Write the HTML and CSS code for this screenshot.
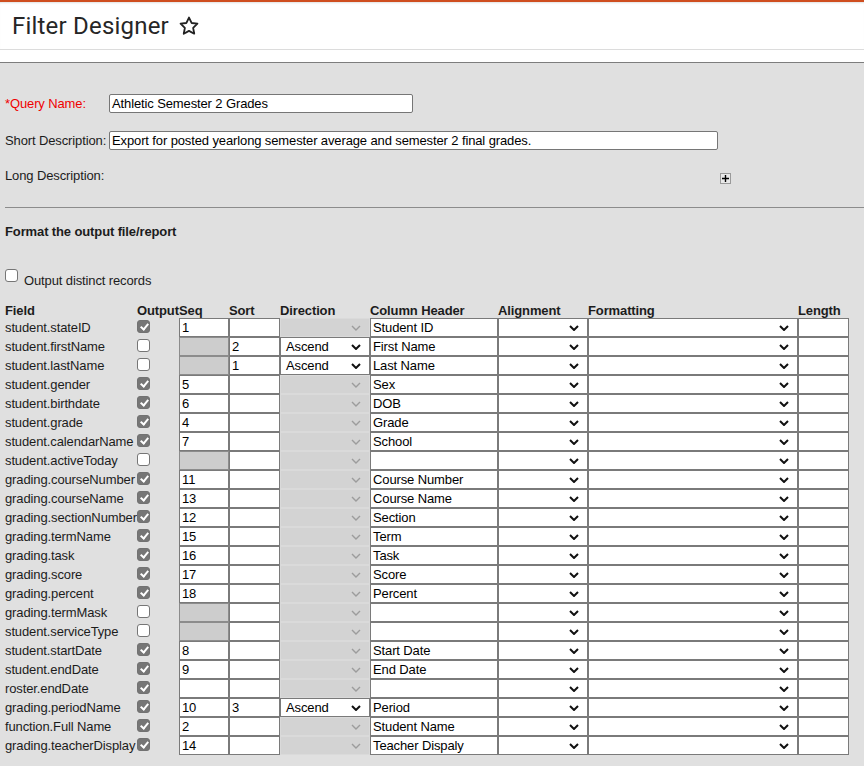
FILE: index.html
```html
<!DOCTYPE html>
<html>
<head>
<meta charset="utf-8">
<title>Filter Designer</title>
<link rel="stylesheet" href="styles.css">
</head>
<body>
<header class="top">
  <h1 class="title">Filter Designer</h1>
  <svg class="star" viewBox="0 0 24 24" width="22" height="22"><path d="M12 2.8l2.8 5.9 6.4.8-4.7 4.5 1.2 6.4L12 17.3l-5.7 3.1 1.2-6.4-4.7-4.5 6.4-.8z" fill="none" stroke="#222" stroke-width="2" stroke-linejoin="round"/></svg>
</header>
<div class="subbar"></div>
<main class="main">
  <div class="frow r1"><label class="lbl req">*Query Name:</label><div class="tin w1">Athletic Semester 2 Grades</div></div>
  <div class="frow r2"><label class="lbl">Short Description:</label><div class="tin w2">Export for posted yearlong semester average and semester 2 final grades.</div></div>
  <div class="frow r3"><label class="lbl">Long Description:</label><span class="plus"><svg viewBox="0 0 9 9" width="9" height="9"><path d="M4.5 1v7M1 4.5h7" stroke="#000" stroke-width="1.4"/></svg></span></div>
  <hr class="sep">
  <div class="sect">Format the output file/report</div>
  <div class="distinct"><span class="cb"></span><span class="dlbl">Output distinct records</span></div>
  <table class="grid">
    <colgroup><col class="c-f"><col class="c-o"><col class="c-s"><col class="c-so"><col class="c-d"><col class="c-h"><col class="c-a"><col class="c-fm"><col class="c-l"></colgroup>
    <thead><tr><th>Field</th><th>Output</th><th>Seq</th><th>Sort</th><th>Direction</th><th>Column Header</th><th>Alignment</th><th>Formatting</th><th>Length</th></tr></thead>
    <tbody>
      <tr><td class="fld">student.stateID</td><td><span class="cb on"></span></td><td><div class="in">1</div></td><td><div class="in"></div></td><td><div class="sel dis"><span></span><svg class="chev" viewBox="0 0 10 6"><path d="M1 1l4 4 4-4"/></svg></div></td><td><div class="in">Student ID</div></td><td><div class="sel"><span></span><svg class="chev" viewBox="0 0 10 6"><path d="M1 1l4 4 4-4"/></svg></div></td><td><div class="sel"><span></span><svg class="chev" viewBox="0 0 10 6"><path d="M1 1l4 4 4-4"/></svg></div></td><td><div class="in"></div></td></tr>
      <tr><td class="fld">student.firstName</td><td><span class="cb"></span></td><td><div class="in dis"></div></td><td><div class="in">2</div></td><td><div class="sel"><span>Ascend</span><svg class="chev" viewBox="0 0 10 6"><path d="M1 1l4 4 4-4"/></svg></div></td><td><div class="in">First Name</div></td><td><div class="sel"><span></span><svg class="chev" viewBox="0 0 10 6"><path d="M1 1l4 4 4-4"/></svg></div></td><td><div class="sel"><span></span><svg class="chev" viewBox="0 0 10 6"><path d="M1 1l4 4 4-4"/></svg></div></td><td><div class="in"></div></td></tr>
      <tr><td class="fld">student.lastName</td><td><span class="cb"></span></td><td><div class="in dis"></div></td><td><div class="in">1</div></td><td><div class="sel"><span>Ascend</span><svg class="chev" viewBox="0 0 10 6"><path d="M1 1l4 4 4-4"/></svg></div></td><td><div class="in">Last Name</div></td><td><div class="sel"><span></span><svg class="chev" viewBox="0 0 10 6"><path d="M1 1l4 4 4-4"/></svg></div></td><td><div class="sel"><span></span><svg class="chev" viewBox="0 0 10 6"><path d="M1 1l4 4 4-4"/></svg></div></td><td><div class="in"></div></td></tr>
      <tr><td class="fld">student.gender</td><td><span class="cb on"></span></td><td><div class="in">5</div></td><td><div class="in"></div></td><td><div class="sel dis"><span></span><svg class="chev" viewBox="0 0 10 6"><path d="M1 1l4 4 4-4"/></svg></div></td><td><div class="in">Sex</div></td><td><div class="sel"><span></span><svg class="chev" viewBox="0 0 10 6"><path d="M1 1l4 4 4-4"/></svg></div></td><td><div class="sel"><span></span><svg class="chev" viewBox="0 0 10 6"><path d="M1 1l4 4 4-4"/></svg></div></td><td><div class="in"></div></td></tr>
      <tr><td class="fld">student.birthdate</td><td><span class="cb on"></span></td><td><div class="in">6</div></td><td><div class="in"></div></td><td><div class="sel dis"><span></span><svg class="chev" viewBox="0 0 10 6"><path d="M1 1l4 4 4-4"/></svg></div></td><td><div class="in">DOB</div></td><td><div class="sel"><span></span><svg class="chev" viewBox="0 0 10 6"><path d="M1 1l4 4 4-4"/></svg></div></td><td><div class="sel"><span></span><svg class="chev" viewBox="0 0 10 6"><path d="M1 1l4 4 4-4"/></svg></div></td><td><div class="in"></div></td></tr>
      <tr><td class="fld">student.grade</td><td><span class="cb on"></span></td><td><div class="in">4</div></td><td><div class="in"></div></td><td><div class="sel dis"><span></span><svg class="chev" viewBox="0 0 10 6"><path d="M1 1l4 4 4-4"/></svg></div></td><td><div class="in">Grade</div></td><td><div class="sel"><span></span><svg class="chev" viewBox="0 0 10 6"><path d="M1 1l4 4 4-4"/></svg></div></td><td><div class="sel"><span></span><svg class="chev" viewBox="0 0 10 6"><path d="M1 1l4 4 4-4"/></svg></div></td><td><div class="in"></div></td></tr>
      <tr><td class="fld">student.calendarName</td><td><span class="cb on"></span></td><td><div class="in">7</div></td><td><div class="in"></div></td><td><div class="sel dis"><span></span><svg class="chev" viewBox="0 0 10 6"><path d="M1 1l4 4 4-4"/></svg></div></td><td><div class="in">School</div></td><td><div class="sel"><span></span><svg class="chev" viewBox="0 0 10 6"><path d="M1 1l4 4 4-4"/></svg></div></td><td><div class="sel"><span></span><svg class="chev" viewBox="0 0 10 6"><path d="M1 1l4 4 4-4"/></svg></div></td><td><div class="in"></div></td></tr>
      <tr><td class="fld">student.activeToday</td><td><span class="cb"></span></td><td><div class="in dis"></div></td><td><div class="in"></div></td><td><div class="sel dis"><span></span><svg class="chev" viewBox="0 0 10 6"><path d="M1 1l4 4 4-4"/></svg></div></td><td><div class="in"></div></td><td><div class="sel"><span></span><svg class="chev" viewBox="0 0 10 6"><path d="M1 1l4 4 4-4"/></svg></div></td><td><div class="sel"><span></span><svg class="chev" viewBox="0 0 10 6"><path d="M1 1l4 4 4-4"/></svg></div></td><td><div class="in"></div></td></tr>
      <tr><td class="fld">grading.courseNumber</td><td><span class="cb on"></span></td><td><div class="in">11</div></td><td><div class="in"></div></td><td><div class="sel dis"><span></span><svg class="chev" viewBox="0 0 10 6"><path d="M1 1l4 4 4-4"/></svg></div></td><td><div class="in">Course Number</div></td><td><div class="sel"><span></span><svg class="chev" viewBox="0 0 10 6"><path d="M1 1l4 4 4-4"/></svg></div></td><td><div class="sel"><span></span><svg class="chev" viewBox="0 0 10 6"><path d="M1 1l4 4 4-4"/></svg></div></td><td><div class="in"></div></td></tr>
      <tr><td class="fld">grading.courseName</td><td><span class="cb on"></span></td><td><div class="in">13</div></td><td><div class="in"></div></td><td><div class="sel dis"><span></span><svg class="chev" viewBox="0 0 10 6"><path d="M1 1l4 4 4-4"/></svg></div></td><td><div class="in">Course Name</div></td><td><div class="sel"><span></span><svg class="chev" viewBox="0 0 10 6"><path d="M1 1l4 4 4-4"/></svg></div></td><td><div class="sel"><span></span><svg class="chev" viewBox="0 0 10 6"><path d="M1 1l4 4 4-4"/></svg></div></td><td><div class="in"></div></td></tr>
      <tr><td class="fld">grading.sectionNumber</td><td><span class="cb on"></span></td><td><div class="in">12</div></td><td><div class="in"></div></td><td><div class="sel dis"><span></span><svg class="chev" viewBox="0 0 10 6"><path d="M1 1l4 4 4-4"/></svg></div></td><td><div class="in">Section</div></td><td><div class="sel"><span></span><svg class="chev" viewBox="0 0 10 6"><path d="M1 1l4 4 4-4"/></svg></div></td><td><div class="sel"><span></span><svg class="chev" viewBox="0 0 10 6"><path d="M1 1l4 4 4-4"/></svg></div></td><td><div class="in"></div></td></tr>
      <tr><td class="fld">grading.termName</td><td><span class="cb on"></span></td><td><div class="in">15</div></td><td><div class="in"></div></td><td><div class="sel dis"><span></span><svg class="chev" viewBox="0 0 10 6"><path d="M1 1l4 4 4-4"/></svg></div></td><td><div class="in">Term</div></td><td><div class="sel"><span></span><svg class="chev" viewBox="0 0 10 6"><path d="M1 1l4 4 4-4"/></svg></div></td><td><div class="sel"><span></span><svg class="chev" viewBox="0 0 10 6"><path d="M1 1l4 4 4-4"/></svg></div></td><td><div class="in"></div></td></tr>
      <tr><td class="fld">grading.task</td><td><span class="cb on"></span></td><td><div class="in">16</div></td><td><div class="in"></div></td><td><div class="sel dis"><span></span><svg class="chev" viewBox="0 0 10 6"><path d="M1 1l4 4 4-4"/></svg></div></td><td><div class="in">Task</div></td><td><div class="sel"><span></span><svg class="chev" viewBox="0 0 10 6"><path d="M1 1l4 4 4-4"/></svg></div></td><td><div class="sel"><span></span><svg class="chev" viewBox="0 0 10 6"><path d="M1 1l4 4 4-4"/></svg></div></td><td><div class="in"></div></td></tr>
      <tr><td class="fld">grading.score</td><td><span class="cb on"></span></td><td><div class="in">17</div></td><td><div class="in"></div></td><td><div class="sel dis"><span></span><svg class="chev" viewBox="0 0 10 6"><path d="M1 1l4 4 4-4"/></svg></div></td><td><div class="in">Score</div></td><td><div class="sel"><span></span><svg class="chev" viewBox="0 0 10 6"><path d="M1 1l4 4 4-4"/></svg></div></td><td><div class="sel"><span></span><svg class="chev" viewBox="0 0 10 6"><path d="M1 1l4 4 4-4"/></svg></div></td><td><div class="in"></div></td></tr>
      <tr><td class="fld">grading.percent</td><td><span class="cb on"></span></td><td><div class="in">18</div></td><td><div class="in"></div></td><td><div class="sel dis"><span></span><svg class="chev" viewBox="0 0 10 6"><path d="M1 1l4 4 4-4"/></svg></div></td><td><div class="in">Percent</div></td><td><div class="sel"><span></span><svg class="chev" viewBox="0 0 10 6"><path d="M1 1l4 4 4-4"/></svg></div></td><td><div class="sel"><span></span><svg class="chev" viewBox="0 0 10 6"><path d="M1 1l4 4 4-4"/></svg></div></td><td><div class="in"></div></td></tr>
      <tr><td class="fld">grading.termMask</td><td><span class="cb"></span></td><td><div class="in dis"></div></td><td><div class="in"></div></td><td><div class="sel dis"><span></span><svg class="chev" viewBox="0 0 10 6"><path d="M1 1l4 4 4-4"/></svg></div></td><td><div class="in"></div></td><td><div class="sel"><span></span><svg class="chev" viewBox="0 0 10 6"><path d="M1 1l4 4 4-4"/></svg></div></td><td><div class="sel"><span></span><svg class="chev" viewBox="0 0 10 6"><path d="M1 1l4 4 4-4"/></svg></div></td><td><div class="in"></div></td></tr>
      <tr><td class="fld">student.serviceType</td><td><span class="cb"></span></td><td><div class="in dis"></div></td><td><div class="in"></div></td><td><div class="sel dis"><span></span><svg class="chev" viewBox="0 0 10 6"><path d="M1 1l4 4 4-4"/></svg></div></td><td><div class="in"></div></td><td><div class="sel"><span></span><svg class="chev" viewBox="0 0 10 6"><path d="M1 1l4 4 4-4"/></svg></div></td><td><div class="sel"><span></span><svg class="chev" viewBox="0 0 10 6"><path d="M1 1l4 4 4-4"/></svg></div></td><td><div class="in"></div></td></tr>
      <tr><td class="fld">student.startDate</td><td><span class="cb on"></span></td><td><div class="in">8</div></td><td><div class="in"></div></td><td><div class="sel dis"><span></span><svg class="chev" viewBox="0 0 10 6"><path d="M1 1l4 4 4-4"/></svg></div></td><td><div class="in">Start Date</div></td><td><div class="sel"><span></span><svg class="chev" viewBox="0 0 10 6"><path d="M1 1l4 4 4-4"/></svg></div></td><td><div class="sel"><span></span><svg class="chev" viewBox="0 0 10 6"><path d="M1 1l4 4 4-4"/></svg></div></td><td><div class="in"></div></td></tr>
      <tr><td class="fld">student.endDate</td><td><span class="cb on"></span></td><td><div class="in">9</div></td><td><div class="in"></div></td><td><div class="sel dis"><span></span><svg class="chev" viewBox="0 0 10 6"><path d="M1 1l4 4 4-4"/></svg></div></td><td><div class="in">End Date</div></td><td><div class="sel"><span></span><svg class="chev" viewBox="0 0 10 6"><path d="M1 1l4 4 4-4"/></svg></div></td><td><div class="sel"><span></span><svg class="chev" viewBox="0 0 10 6"><path d="M1 1l4 4 4-4"/></svg></div></td><td><div class="in"></div></td></tr>
      <tr><td class="fld">roster.endDate</td><td><span class="cb on"></span></td><td><div class="in"></div></td><td><div class="in"></div></td><td><div class="sel dis"><span></span><svg class="chev" viewBox="0 0 10 6"><path d="M1 1l4 4 4-4"/></svg></div></td><td><div class="in"></div></td><td><div class="sel"><span></span><svg class="chev" viewBox="0 0 10 6"><path d="M1 1l4 4 4-4"/></svg></div></td><td><div class="sel"><span></span><svg class="chev" viewBox="0 0 10 6"><path d="M1 1l4 4 4-4"/></svg></div></td><td><div class="in"></div></td></tr>
      <tr><td class="fld">grading.periodName</td><td><span class="cb on"></span></td><td><div class="in">10</div></td><td><div class="in">3</div></td><td><div class="sel"><span>Ascend</span><svg class="chev" viewBox="0 0 10 6"><path d="M1 1l4 4 4-4"/></svg></div></td><td><div class="in">Period</div></td><td><div class="sel"><span></span><svg class="chev" viewBox="0 0 10 6"><path d="M1 1l4 4 4-4"/></svg></div></td><td><div class="sel"><span></span><svg class="chev" viewBox="0 0 10 6"><path d="M1 1l4 4 4-4"/></svg></div></td><td><div class="in"></div></td></tr>
      <tr><td class="fld">function.Full Name</td><td><span class="cb on"></span></td><td><div class="in">2</div></td><td><div class="in"></div></td><td><div class="sel dis"><span></span><svg class="chev" viewBox="0 0 10 6"><path d="M1 1l4 4 4-4"/></svg></div></td><td><div class="in">Student Name</div></td><td><div class="sel"><span></span><svg class="chev" viewBox="0 0 10 6"><path d="M1 1l4 4 4-4"/></svg></div></td><td><div class="sel"><span></span><svg class="chev" viewBox="0 0 10 6"><path d="M1 1l4 4 4-4"/></svg></div></td><td><div class="in"></div></td></tr>
      <tr><td class="fld">grading.teacherDisplay</td><td><span class="cb on"></span></td><td><div class="in">14</div></td><td><div class="in"></div></td><td><div class="sel dis"><span></span><svg class="chev" viewBox="0 0 10 6"><path d="M1 1l4 4 4-4"/></svg></div></td><td><div class="in">Teacher Dispaly</div></td><td><div class="sel"><span></span><svg class="chev" viewBox="0 0 10 6"><path d="M1 1l4 4 4-4"/></svg></div></td><td><div class="sel"><span></span><svg class="chev" viewBox="0 0 10 6"><path d="M1 1l4 4 4-4"/></svg></div></td><td><div class="in"></div></td></tr>
    </tbody>
  </table>
</main>
</body>
</html>
```
FILE: styles.css
```css
html, body {
  margin: 0;
  padding: 0;
}
body {
  background: #e0e0e0;
  font-family: "Liberation Sans", Arial, sans-serif;
  font-size: 13px;
  letter-spacing: -0.12px;
  color: #1c1c1c;
  min-height: 766px;
}
.top {
  display: flex;
  align-items: flex-start;
  height: 47px;
  background: #fff;
  border-top: 2px solid #cf4e1f;
  border-bottom: 1px solid #dcdcdc;
  box-sizing: content-box;
  box-shadow: inset 0 2px 2px -1px rgba(0,0,0,0.12);
}
.title {
  margin: 10px 0 0 12px;
  font-family: Roboto, "Liberation Sans", sans-serif;
  font-weight: 400;
  font-size: 24px;
  letter-spacing: 0.2px;
  line-height: 28px;
  color: #262626;
}
.star {
  margin: 13px 0 0 9px;
}
.subbar {
  height: 12px;
  background: #fff;
  border-bottom: 1px solid #7d7d7d;
}
.main {
  padding: 0 0 12px 5px;
}
.frow {
  display: flex;
  align-items: center;
  height: 19px;
}
.r1 { margin-top: 31px; }
.r2 { margin-top: 18px; }
.r3 { margin-top: 16px; align-items: flex-start; }
.lbl {
  width: 104px;
  flex: none;
  line-height: 19px;
  white-space: nowrap;
}
.req { color: #f00000; }
.tin {
  box-sizing: border-box;
  height: 19px;
  border: 1px solid #767676;
  border-radius: 2px;
  background: #fff;
  padding: 0 2px;
  line-height: 17px;
  color: #000;
  white-space: nowrap;
  overflow: hidden;
}
.w1 { width: 304px; }
.w2 { width: 609px; }
.plus {
  box-sizing: border-box;
  width: 11px;
  height: 11px;
  margin: 7px 0 0 611px;
  border: 1px solid #9a9a9a;
  background: #e9e9e9;
  display: flex;
  align-items: center;
  justify-content: center;
}
.plus svg { display: block; }
.sep {
  margin: 22px 0 0 0;
  border: 0;
  border-top: 1px solid #8c8c8c;
  height: 0;
}
.sect {
  margin-top: 16px;
  font-weight: bold;
  line-height: 15px;
}
.distinct {
  display: flex;
  align-items: flex-start;
  margin-top: 30px;
  height: 18px;
}
.dlbl {
  margin: 4px 0 0 6px;
  line-height: 15px;
}
.cb {
  display: block;
  box-sizing: border-box;
  width: 13px;
  height: 13px;
  border: 1px solid #767676;
  border-radius: 3px;
  background: #fff;
  flex: none;
}
.cb.on {
  border-color: #727272;
  background-color: #767676;
  position: relative;
}
.cb.on::after {
  content: "";
  position: absolute;
  left: 3.5px;
  top: 1px;
  width: 3px;
  height: 6px;
  border: solid #fff;
  border-width: 0 2px 2px 0;
  transform: rotate(40deg);
}
.grid {
  margin-top: 16px;
  border-collapse: separate;
  border-spacing: 0;
  table-layout: fixed;
  width: 844px;
}
.c-f { width: 132px; }
.c-o { width: 42px; }
.c-s { width: 50px; }
.c-so { width: 51px; }
.c-d { width: 90px; }
.c-h { width: 128px; }
.c-a { width: 90px; }
.c-fm { width: 210px; }
.c-l { width: 51px; }
.grid th {
  padding: 0;
  text-align: left;
  font-weight: bold;
  line-height: 15px;
  white-space: nowrap;
  overflow: visible;
}
.grid td {
  padding: 0;
  height: 19px;
  vertical-align: top;
}
.fld {
  line-height: 19px;
  white-space: nowrap;
}
.grid .cb { margin-top: 2px; }
.in {
  box-sizing: border-box;
  height: 19px;
  border: 1px solid #7a7a7a;
  background: #fff;
  padding: 0 2px;
  line-height: 17px;
  color: #000;
  white-space: nowrap;
  overflow: hidden;
}
.in.dis {
  background: #cdcdcd;
  border-color: #8c8c8c;
}
.sel {
  box-sizing: border-box;
  height: 19px;
  border: 1px solid #7a7a7a;
  background: #fff;
  padding: 0 8px 0 5px;
  display: flex;
  align-items: center;
  justify-content: space-between;
  color: #000;
  line-height: 17px;
}
.chev {
  width: 10px;
  height: 6px;
  flex: none;
}
.chev path {
  fill: none;
  stroke: #111;
  stroke-width: 2;
}
.sel.dis {
  background: #d3d3d3;
  border-color: #dadada;
}
.sel.dis .chev path {
  stroke: #9c9c9c;
  stroke-width: 1.4;
}
```
